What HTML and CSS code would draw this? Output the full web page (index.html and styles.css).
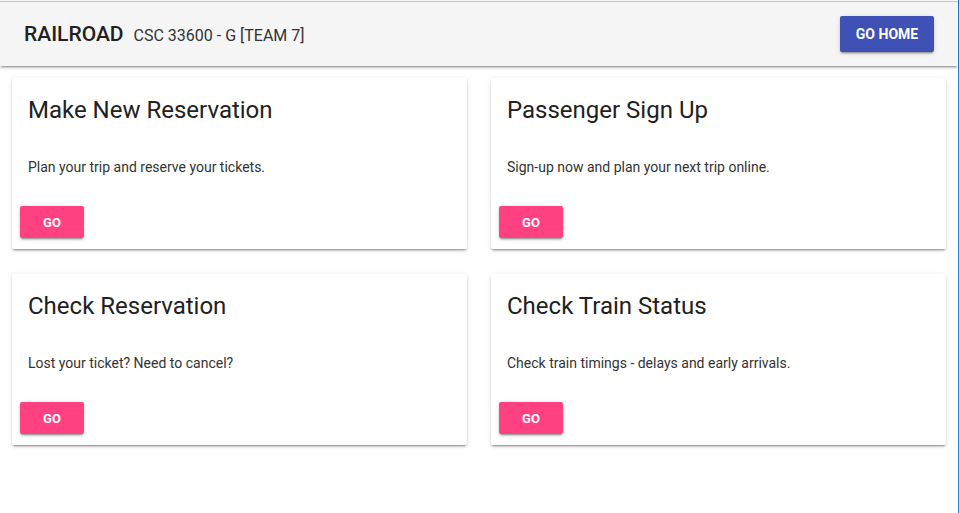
FILE: index.html
```html
<!DOCTYPE html>
<html lang="en">
<head>
<meta charset="utf-8">
<title>Railroad</title>
<link rel="stylesheet" href="styles.css">
</head>
<body>
<div class="app">
  <header class="header">
    <div class="brand">
      <span class="brand-title">RAILROAD</span>
      <span class="brand-sub">CSC 33600 - G [TEAM 7]</span>
    </div>
    <button class="btn btn-primary">GO HOME</button>
  </header>
  <main class="grid">
    <section class="card">
      <h2 class="card-title">Make New Reservation</h2>
      <p class="card-text">Plan your trip and reserve your tickets.</p>
      <div class="card-actions"><button class="btn btn-accent">GO</button></div>
    </section>
    <section class="card">
      <h2 class="card-title">Passenger Sign Up</h2>
      <p class="card-text">Sign-up now and plan your next trip online.</p>
      <div class="card-actions"><button class="btn btn-accent">GO</button></div>
    </section>
    <section class="card">
      <h2 class="card-title">Check Reservation</h2>
      <p class="card-text">Lost your ticket? Need to cancel?</p>
      <div class="card-actions"><button class="btn btn-accent">GO</button></div>
    </section>
    <section class="card">
      <h2 class="card-title">Check Train Status</h2>
      <p class="card-text">Check train timings - delays and early arrivals.</p>
      <div class="card-actions"><button class="btn btn-accent">GO</button></div>
    </section>
  </main>
</div>
</body>
</html>
```
FILE: styles.css
```css
html, body {
  margin: 0;
  padding: 0;
  background: #fff;
}
body {
  font-family: Roboto, "Liberation Sans", Arial, sans-serif;
  color: rgba(0,0,0,.87);
}
.app {
  box-sizing: border-box;
  width: 959px;
  height: 513px;
  border-right: 1px solid #1e88e5;
  padding-top: 1px;
}
.header {
  box-sizing: border-box;
  height: 65px;
  border-top: 1px solid #c4c4c4;
  background: #f5f5f5;
  display: flex;
  align-items: center;
  justify-content: space-between;
  padding: 0 24px 0 24px;
  box-shadow: 0 2px 2px 0 rgba(0,0,0,.14), 0 3px 1px -2px rgba(0,0,0,.2), 0 1px 5px 0 rgba(0,0,0,.12);
  position: relative;
  z-index: 1;
}
.brand {
  display: flex;
  align-items: baseline;
  gap: 10px;
}
.brand-title {
  font-size: 21px;
  font-weight: 500;
  color: #212121;
}
.brand-sub {
  font-size: 16px;
  color: #333;
}
.btn {
  border: 0;
  border-radius: 2px;
  font-family: Roboto, "Liberation Sans", Arial, sans-serif;
  font-weight: 700;
  color: #fff;
  text-transform: uppercase;
  cursor: pointer;
  box-shadow: 0 2px 2px 0 rgba(0,0,0,.14), 0 3px 1px -2px rgba(0,0,0,.2), 0 1px 5px 0 rgba(0,0,0,.12);
}
.btn-primary {
  background: #3f51b5;
  height: 36px;
  width: 94px;
  font-size: 14px;
  padding: 0;
}
.btn-accent {
  background: #ff4081;
  height: 32px;
  width: 64px;
  font-size: 13px;
  padding: 0;
}
.grid {
  display: grid;
  grid-template-columns: 455px 455px;
  column-gap: 24px;
  row-gap: 25px;
  padding: 12px 0 0 12px;
}
.card {
  background: #fff;
  border-radius: 2px;
  height: 171px;
  display: flex;
  flex-direction: column;
  box-shadow: 0 2px 2px 0 rgba(0,0,0,.14), 0 3px 1px -2px rgba(0,0,0,.2), 0 1px 5px 0 rgba(0,0,0,.12);
}
.card-title {
  margin: 0;
  padding: 20px 16px 0;
  font-size: 24px;
  line-height: 24px;
  font-weight: 400;
  color: #212121;
}
.card-text {
  margin: 35px 0 0;
  padding: 0 16px;
  font-size: 14px;
  line-height: 20px;
  color: #333;
}
.card-actions {
  margin-top: 29px;
  padding: 0 8px;
}
```
